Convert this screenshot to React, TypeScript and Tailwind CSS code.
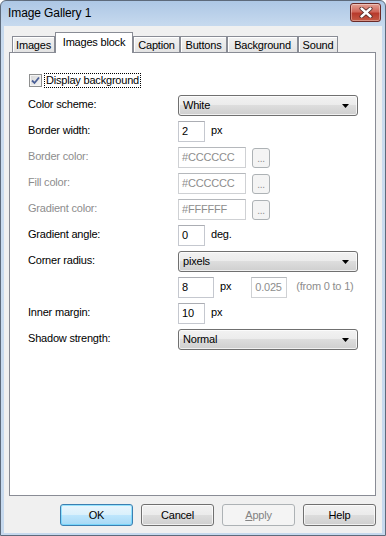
import React from 'react';

const labelDim = 'text-[#8d8d8d]';

function TextBox({ value, w, disabled }: { value: string; w: string; disabled?: boolean }) {
  return (
    <div
      className={`${w} h-[21px] flex items-center pl-[3px] bg-white border border-[#c5c8cf] border-t-[#abadb3] ${
        disabled ? 'text-[#8d8d8d] border-[#cfd1d4] border-t-[#b5b8bc]' : 'text-black'
      }`}
    >
      {value}
    </div>
  );
}

function DotsButton() {
  return (
    <div className="w-[18px] h-[20px] ml-[6px] rounded-[3px] border border-[#adb2b5] bg-[#f4f4f4] text-[#8d8d8d] flex items-end justify-center pb-[3px] leading-[10px] text-[10px]">
      ...
    </div>
  );
}

function Combo({ value }: { value: string }) {
  return (
    <div className="w-[180px] h-[21px] rounded-[3px] border border-[#707070] bg-[linear-gradient(to_bottom,#f2f2f2_0%,#ebebeb_50%,#dddddd_50%,#cfcfcf_100%)] shadow-[inset_0_0_0_1px_rgba(255,255,255,0.7)] flex items-center justify-between pl-[4px] pr-[8px]">
      <span>{value}</span>
      <svg width="7" height="4" viewBox="0 0 7 4">
        <path d="M0 0 H7 L3.5 4 Z" fill="#000" />
      </svg>
    </div>
  );
}

function Row({ label, disabled, children }: { label?: string; disabled?: boolean; children: React.ReactNode }) {
  return (
    <div className="flex h-[21px] items-start">
      <div className={`w-[150px] pt-[2px] leading-[14px] ${disabled ? labelDim : 'text-black'}`}>{label}</div>
      <div className="flex items-center h-[21px]">{children}</div>
    </div>
  );
}

function Unit({ children, dim }: { children: React.ReactNode; dim?: boolean }) {
  return <span className={`ml-[6px] self-start pt-[2px] leading-[14px] ${dim ? labelDim : ''}`}>{children}</span>;
}

function Tab({ label, w, active }: { label: string; w: string; active?: boolean }) {
  if (active) {
    return (
      <div className={`${w} h-[21px] -mb-px relative z-10 bg-white border border-b-0 border-[#898c95] flex items-center justify-center pb-[2px]`}>
        {label}
      </div>
    );
  }
  return (
    <div
      className={`${w} h-[16px] bg-[linear-gradient(to_bottom,#f2f2f2,#e3e3e3)] border border-b-0 border-[#898c95] shadow-[inset_1px_1px_0_#ffffff] flex items-center justify-center pt-[1px]`}
    >
      {label}
    </div>
  );
}

function Button({ label, kind }: { label: React.ReactNode; kind?: 'default' | 'disabled' }) {
  const base = 'w-[73px] h-[22px] rounded-[3px] border flex items-center justify-center';
  if (kind === 'default') {
    return (
      <div className={`${base} border-[#3c7fb1] bg-[linear-gradient(to_bottom,#eaf6fd_0%,#d9f0fc_50%,#bee6fd_50%,#a7d9f5_100%)] shadow-[inset_0_0_0_1px_#48d1ff80]`}>
        {label}
      </div>
    );
  }
  if (kind === 'disabled') {
    return <div className={`${base} border-[#adb2b5] bg-[#f4f4f4] text-[#838383]`}>{label}</div>;
  }
  return (
    <div className={`${base} border-[#707070] bg-[linear-gradient(to_bottom,#f2f2f2_0%,#ebebeb_50%,#dddddd_50%,#cfcfcf_100%)] shadow-[inset_0_0_0_1px_rgba(255,255,255,0.7)]`}>
      {label}
    </div>
  );
}

export default function App() {
  return (
    <div className="w-[386px] h-[536px] flex flex-col rounded-t-[6px] border border-[#5d6a7b] bg-[linear-gradient(to_bottom,#adc7e5_0px,#c6d9ee_24px,#cbdcef_60px,#c6d9ee_100%)] px-[3px] pb-[2px] font-['Liberation_Sans',Arial,sans-serif] text-[11px] tracking-[-0.2px] text-black">
      {/* title bar */}
      <div className="h-[25px] flex items-start justify-between shrink-0">
        <div className="pl-[4px] pt-[5px] text-[12px] tracking-[-0.1px] leading-[15px] text-black">Image Gallery 1</div>
        <div className="mt-[2px] mr-[1px] w-[31px] h-[19px] rounded-[3px] border border-[#6b2a27] bg-[linear-gradient(to_bottom,#e3a193_0%,#d0675a_45%,#b83a2c_55%,#c45a45_100%)] shadow-[inset_0_0_0_1px_rgba(255,255,255,0.35)] flex items-center justify-center">
          <svg width="14" height="11" viewBox="0 0 14 11">
            <path d="M2.5 1.5 L11.5 9.5 M11.5 1.5 L2.5 9.5" stroke="#4a2320" strokeWidth="4" strokeLinecap="round" />
            <path d="M2.5 1.5 L11.5 9.5 M11.5 1.5 L2.5 9.5" stroke="#ffffff" strokeWidth="2.4" strokeLinecap="round" />
          </svg>
        </div>
      </div>

      {/* client area */}
      <div className="flex-1 flex flex-col bg-[#f0f0f0] pt-[6px] pl-[5px] pr-[6px]">
        <div className="h-[20px] flex items-end pl-[3px] shrink-0">
          <Tab label="Images" w="w-[43px]" />
          <Tab label="Images block" w="w-[78px]" active />
          <Tab label="Caption" w="w-[47px]" />
          <Tab label="Buttons" w="w-[47px]" />
          <Tab label="Background" w="w-[71px]" />
          <Tab label="Sound" w="w-[40px]" />
        </div>

        <div className="h-[444px] shrink-0 bg-white border border-[#898c95] pt-[20px] pl-[18px] flex flex-col">
          <div className="h-[15px] flex items-center pl-[1px]">
            <div className="w-[13px] h-[13px] border border-[#8e8f8f] bg-[linear-gradient(135deg,#d6d6d6,#f6f6f6)] shadow-[inset_0_0_0_1px_#f4f4f4] flex items-center justify-center">
              <svg width="9" height="9" viewBox="0 0 9 9">
                <path d="M1 4.5 L3.5 7 L8 1.5" stroke="#4a5f97" strokeWidth="1.8" fill="none" />
              </svg>
            </div>
            <span className="ml-[2px] px-[1px] h-[15px] leading-[13px] border border-dotted border-black">Display background</span>
          </div>

          <div className="mt-[7px] flex flex-col gap-[5px]">
            <Row label="Color scheme:">
              <Combo value="White" />
            </Row>
            <Row label="Border width:">
              <TextBox value="2" w="w-[27px]" />
              <Unit>px</Unit>
            </Row>
            <Row label="Border color:" disabled>
              <TextBox value="#CCCCCC" w="w-[68px]" disabled />
              <DotsButton />
            </Row>
            <Row label="Fill color:" disabled>
              <TextBox value="#CCCCCC" w="w-[68px]" disabled />
              <DotsButton />
            </Row>
            <Row label="Gradient color:" disabled>
              <TextBox value="#FFFFFF" w="w-[68px]" disabled />
              <DotsButton />
            </Row>
            <Row label="Gradient angle:">
              <TextBox value="0" w="w-[27px]" />
              <Unit>deg.</Unit>
            </Row>
            <Row label="Corner radius:">
              <Combo value="pixels" />
            </Row>
            <Row>
              <TextBox value="8" w="w-[36px]" />
              <Unit>px</Unit>
              <div className="ml-[20px]">
                <TextBox value="0.025" w="w-[36px]" disabled />
              </div>
              <span className={`ml-[9px] self-start pt-[2px] leading-[14px] ${labelDim}`}>(from 0 to 1)</span>
            </Row>
            <Row label="Inner margin:">
              <TextBox value="10" w="w-[27px]" />
              <Unit>px</Unit>
            </Row>
            <Row label="Shadow strength:">
              <Combo value="Normal" />
            </Row>
          </div>
        </div>

        <div className="mt-[8px] h-[22px] flex justify-end gap-[8px] shrink-0">
          <Button label="OK" kind="default" />
          <Button label="Cancel" />
          <Button
            label={
              <span>
                <span className="underline">A</span>pply
              </span>
            }
            kind="disabled"
          />
          <Button label="Help" />
        </div>
      </div>
    </div>
  );
}
